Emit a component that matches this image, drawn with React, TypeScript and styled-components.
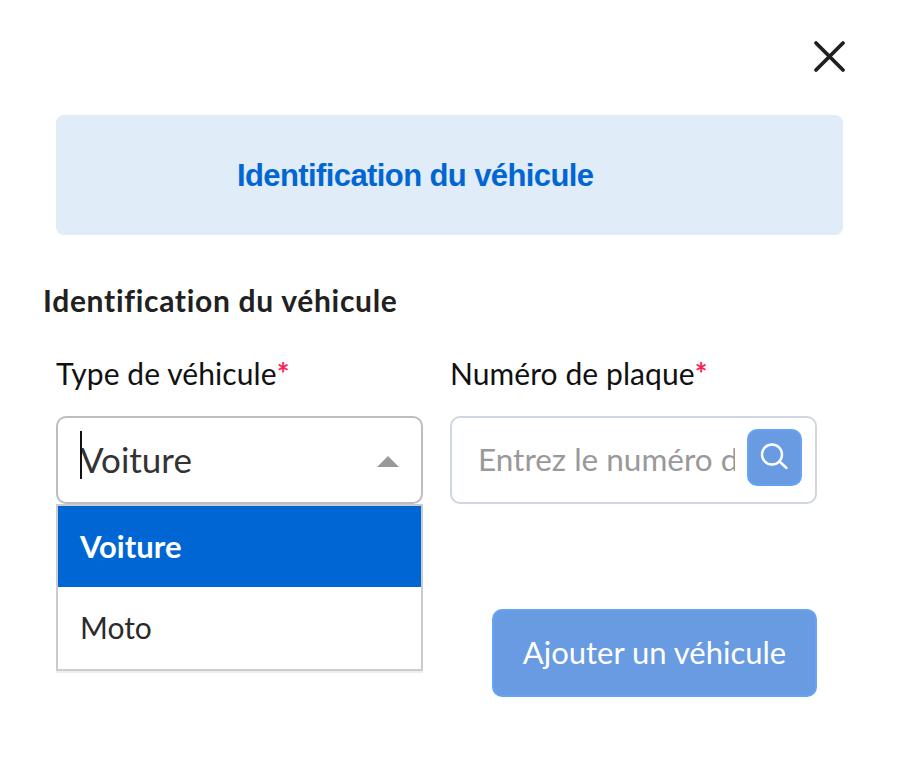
import React from "react";
import styled, { createGlobalStyle } from "styled-components";

const GlobalStyle = createGlobalStyle`
  * {
    box-sizing: border-box;
  }
  body {
    margin: 0;
    background: #fff;
    font-family: "Lato", "Noto Sans", sans-serif;
  }
`;

const Modal = styled.div`
  width: 920px;
  height: 757px;
  padding: 38px 0 0 56px;
  display: flex;
  flex-direction: column;
`;

const CloseRow = styled.div`
  width: 791px;
  height: 77px;
  display: flex;
  justify-content: flex-end;
  align-items: flex-start;
`;

const CloseIcon = styled.svg`
  width: 36px;
  height: 36px;
  color: #1f1f1f;
`;

const Banner = styled.div`
  width: 787px;
  height: 120px;
  padding: 2px 0 0 181px;
  display: flex;
  align-items: center;
  background: #e0ecf8;
  border-radius: 8px;
  color: #0066d3;
  font-family: "Liberation Sans", Arial, sans-serif;
  font-size: 31px;
  font-weight: 700;
  letter-spacing: -0.6px;
`;

const SectionTitle = styled.h2`
  margin: 48px 0 0 -13px;
  font-size: 30px;
  line-height: 34px;
  font-weight: 700;
  letter-spacing: 0.7px;
  color: #212121;
`;

const FieldRow = styled.div`
  display: flex;
  gap: 27px;
  margin-top: 38px;
`;

const Field = styled.div`
  position: relative;
  width: 367px;
`;

const Label = styled.label`
  display: block;
  height: 61px;
  font-size: 30px;
  line-height: 36px;
  letter-spacing: 0.08px;
  color: #111;
`;

const Required = styled.span`
  color: #ff1f55;
  font-weight: 700;
`;

const SelectBox = styled.div`
  position: relative;
  height: 88px;
  padding: 0 0 2px 22px;
  display: flex;
  align-items: center;
  border: 2px solid #bdbdbd;
  border-radius: 10px;
  background: #fff;
  font-size: 35px;
  color: #333;
`;

const Caret = styled.span`
  position: absolute;
  left: 22px;
  top: 13px;
  width: 2px;
  height: 48px;
  background: #111;
`;

const Arrow = styled.span`
  position: absolute;
  right: 22px;
  top: 38px;
  width: 0;
  height: 0;
  border-left: 11px solid transparent;
  border-right: 11px solid transparent;
  border-bottom: 11px solid #999;
`;

const Menu = styled.ul`
  position: absolute;
  left: 0;
  right: 0;
  top: 149px;
  margin: 0;
  padding: 0;
  list-style: none;
  height: 167px;
  background: #fff;
  border: 2px solid #ccc;
  box-shadow: 0 2px 0 #eee;
`;

const MenuItem = styled.li<{ $active?: boolean }>`
  height: 81px;
  padding: 0 0 2px 22px;
  display: flex;
  align-items: center;
  font-size: ${(p) => (p.$active ? 31 : 30)}px;
  font-weight: ${(p) => (p.$active ? 700 : 400)};
  background: ${(p) => (p.$active ? "#0066d3" : "#fff")};
  color: ${(p) => (p.$active ? "#fff" : "#2b2b2b")};
`;

const InputBox = styled.div`
  height: 88px;
  padding: 0 13px 0 26px;
  display: flex;
  align-items: center;
  gap: 12px;
  border: 2px solid #cfd6e1;
  border-radius: 10px;
  background: #fff;
`;

const PlateInput = styled.input`
  flex: 1;
  min-width: 0;
  border: 0;
  outline: 0;
  padding: 0;
  margin-bottom: 2px;
  font-family: inherit;
  font-size: 31.5px;
  color: #333;
  &::placeholder {
    color: #999;
    opacity: 1;
  }
`;

const SearchButton = styled.button`
  width: 55px;
  height: 57px;
  margin-top: -5px;
  padding: 0 0 6px;
  display: flex;
  align-items: center;
  justify-content: center;
  flex-shrink: 0;
  background: #699be2;
  border: 2px solid #66a3f5;
  border-radius: 10px;
  color: #fff;
`;

const Actions = styled.div`
  width: 761px;
  margin-top: 105px;
  display: flex;
  justify-content: flex-end;
`;

const AddButton = styled.button`
  width: 325px;
  height: 88px;
  padding: 0 0 2px;
  background: #699be2;
  border: 2px solid #66a3f5;
  border-radius: 10px;
  color: #fff;
  font-family: inherit;
  font-size: 31px;
`;

const App = () => {
  return (
    <Modal>
      <GlobalStyle />
      <CloseRow>
        <CloseIcon viewBox="0 0 36 36" fill="none" stroke="currentColor" strokeWidth="3.8" strokeLinecap="round">
          <path d="M5 5L32 32M32 5L5 32" />
        </CloseIcon>
      </CloseRow>
      <Banner>Identification du véhicule</Banner>
      <SectionTitle>Identification du véhicule</SectionTitle>
      <FieldRow>
        <Field>
          <Label>
            Type de véhicule<Required>*</Required>
          </Label>
          <SelectBox>
            <Caret />
            Voiture
            <Arrow />
          </SelectBox>
          <Menu>
            <MenuItem $active>Voiture</MenuItem>
            <MenuItem>Moto</MenuItem>
          </Menu>
        </Field>
        <Field>
          <Label>
            Numéro de plaque<Required>*</Required>
          </Label>
          <InputBox>
            <PlateInput placeholder="Entrez le numéro de plaque" />
            <SearchButton aria-label="Rechercher">
              <svg width="30" height="30" viewBox="0 0 30 30" fill="none" stroke="currentColor" strokeWidth="2.4" strokeLinecap="round">
                <circle cx="12" cy="14.5" r="10" />
                <path d="M19.5 21.5L26.5 28" />
              </svg>
            </SearchButton>
          </InputBox>
        </Field>
      </FieldRow>
      <Actions>
        <AddButton>Ajouter un véhicule</AddButton>
      </Actions>
    </Modal>
  );
};

export default App;
